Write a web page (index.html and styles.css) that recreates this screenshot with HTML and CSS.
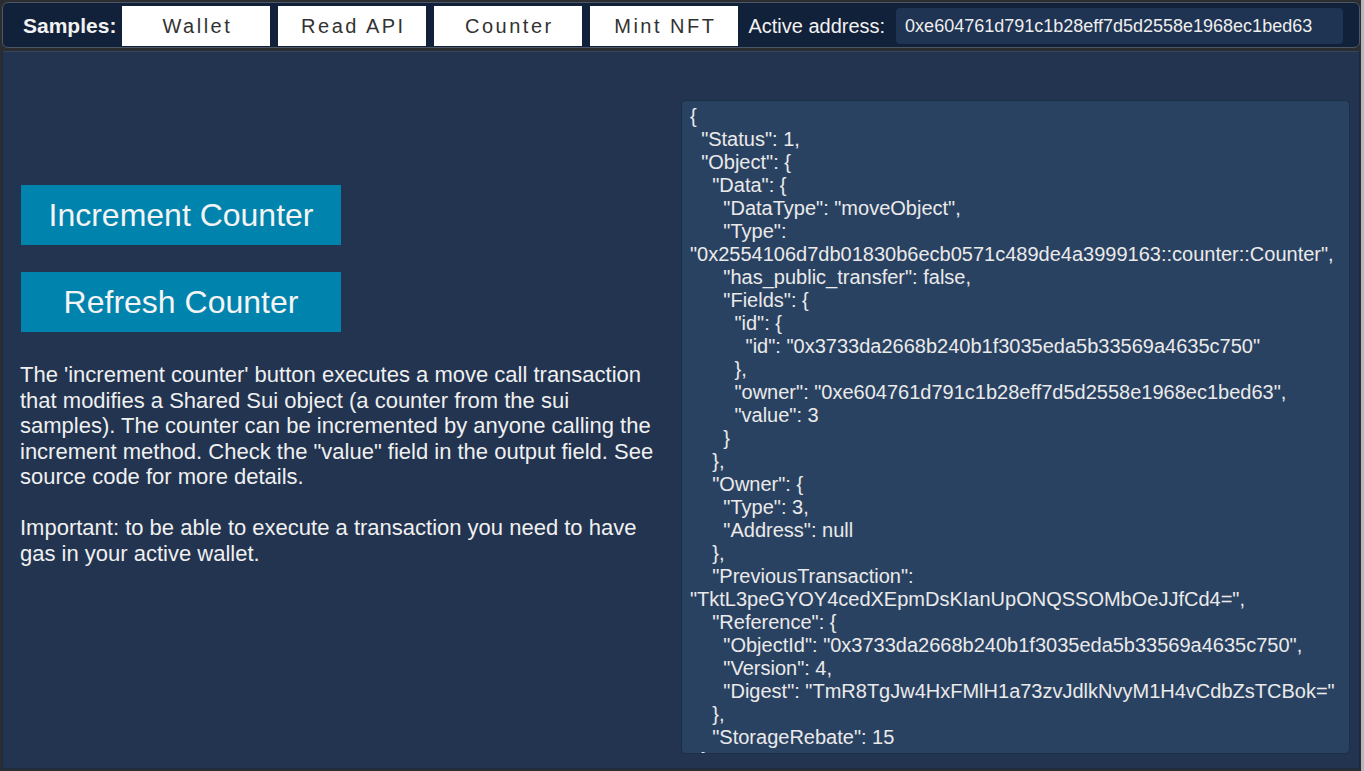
FILE: index.html
```
<!DOCTYPE html>
<html lang="en">
<head>
    <meta charset="UTF-8">
    <title>Sui Unity SDK - Counter</title>
    <link rel="stylesheet" href="styles.css">
</head>
<body>
<div class="app">
    <header class="topbar">
        <span class="label label-bold">Samples:</span>
        <button class="tab">Wallet</button>
        <button class="tab">Read API</button>
        <button class="tab">Counter</button>
        <button class="tab">Mint NFT</button>
        <span class="label label-addr">Active address:</span>
        <div class="address">0xe604761d791c1b28eff7d5d2558e1968ec1bed63</div>
    </header>
    <main class="panel">
        <section class="controls">
            <button class="action">Increment Counter</button>
            <button class="action">Refresh Counter</button>
            <p class="info">The 'increment counter' button executes a move call transaction that modifies a Shared Sui object (a counter from the sui samples). The counter can be incremented by anyone calling the increment method. Check the "value" field in the output field. See source code for more details.</p>
            <p class="info">Important: to be able to execute a transaction you need to have gas in your active wallet.</p>
        </section>
        <pre class="output">{
  "Status": 1,
  "Object": {
    "Data": {
      "DataType": "moveObject",
      "Type": "0x2554106d7db01830b6ecb0571c489de4a3999163::counter::Counter",
      "has_public_transfer": false,
      "Fields": {
        "id": {
          "id": "0x3733da2668b240b1f3035eda5b33569a4635c750"
        },
        "owner": "0xe604761d791c1b28eff7d5d2558e1968ec1bed63",
        "value": 3
      }
    },
    "Owner": {
      "Type": 3,
      "Address": null
    },
    "PreviousTransaction": "TktL3peGYOY4cedXEpmDsKIanUpONQSSOMbOeJJfCd4=",
    "Reference": {
      "ObjectId": "0x3733da2668b240b1f3035eda5b33569a4635c750",
      "Version": 4,
      "Digest": "TmR8TgJw4HxFMlH1a73zvJdlkNvyM1H4vCdbZsTCBok="
    },
    "StorageRebate": 15
  }
}</pre>
    </main>
</div>
</body>
</html>
```
FILE: styles.css
```
*{
    margin:0;
    padding:0;
    box-sizing:border-box;
    font-family:"Liberation Sans", Arial, sans-serif;
}
html,body{
    width:1364px;
    height:771px;
    overflow:hidden;
    background:#2b2d31;
}
.app{
    width:1364px;
    height:771px;
    padding:2px 1px 2px 2px;
    border-right:3px solid #b6b8bb;
    display:flex;
    flex-direction:column;
    gap:3px;
}
/* top bar */
.topbar{
    height:46px;
    flex:0 0 46px;
    display:flex;
    align-items:center;
    padding:2px 16px 0 20px;
    background:#12213a;
    border:1px solid #4b5566;
    border-radius:6px;
}
.label{
    color:#f2f2f2;
    font-size:20px;
    white-space:nowrap;
}
.label-bold{
    font-weight:bold;
    font-size:21px;
    margin-right:6px;
}
.label-addr{
    margin:0 11px 0 10px;
}
.tab{
    width:148px;
    height:40px;
    margin-right:8px;
    border:none;
    background:#ffffff;
    color:#323232;
    font-size:20px;
    letter-spacing:2.5px;
    padding-left:2px;
    cursor:pointer;
}
.tab:nth-of-type(4){
    margin-right:0;
}
.address{
    flex:1;
    height:36px;
    line-height:36px;
    padding-left:9px;
    background:#1f3352;
    border-radius:4px;
    color:#eeeeee;
    font-size:18px;
}
/* main panel */
.panel{
    flex:1;
    min-height:0;
    display:flex;
    padding:0 9px 14px 18px;
    background:#223450;
    border:1px solid #1a2a42;
    border-top-color:#34445c;
    border-radius:3px;
    overflow:hidden;
}
.controls{
    flex:0 0 660px;
    padding-top:133px;
}
.action{
    display:block;
    width:320px;
    height:60px;
    margin:0 0 27px 0;
    border:none;
    background:#0083ad;
    color:#f4f4f4;
    font-size:32px;
    cursor:pointer;
}
.action + .info{
    padding-top:3px;
}
.info{
    width:645px;
    margin-left:-1px;
    color:#f0f0f0;
    font-size:22px;
    line-height:25.5px;
    margin-bottom:25.5px;
}
.output{
    flex:1;
    min-height:0;
    margin-top:48px;
    padding:4px 8px;
    background:#2a4262;
    border:1px solid #1d2e47;
    border-radius:5px;
    color:#eaeaea;
    font-size:20px;
    line-height:23px;
    white-space:pre-wrap;
    overflow:hidden;
}
```
